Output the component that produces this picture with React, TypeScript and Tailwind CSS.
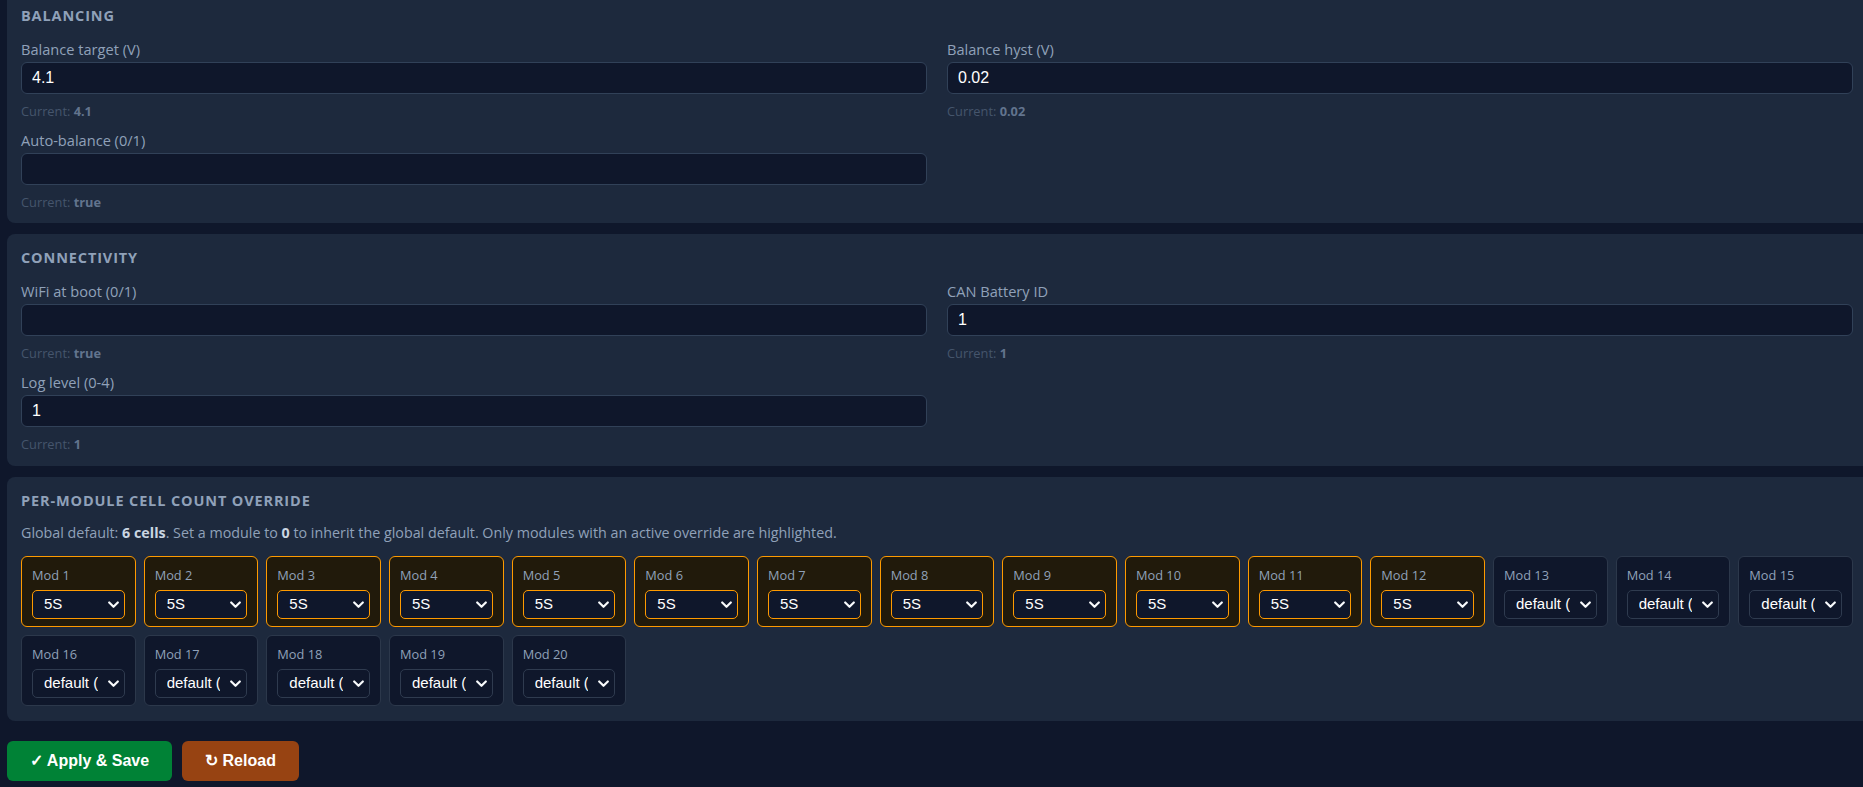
import React from 'react';

type FieldProps = { label: string; value: string; current: string };

// one labelled input with the "Current:" hint underneath
const Field: React.FC<FieldProps> = ({ label, value, current }) => (
  <div className="flex flex-col">
    <label className="mb-1 text-[14.6px] leading-[18px] text-slate-400">{label}</label>
    <input
      defaultValue={value}
      className="h-8 w-full rounded-md border border-slate-700 bg-slate-900 px-[10px] font-['Liberation_Sans',Arial,sans-serif] text-[16px] text-white outline-none"
    />
    <div className="mt-[9px] text-[12.8px] leading-4 text-slate-600">
      Current: <b className="font-bold text-slate-500">{current}</b>
    </div>
  </div>
);

const Panel: React.FC<{ title: string; children: React.ReactNode; className?: string }> = ({ title, children, className }) => (
  <section className={`ml-[7px] rounded-l-lg bg-slate-800 pl-[14px] pr-[10px] pt-[14px] ${className ?? ''}`}>
    <h2 className="mb-[14px] text-[14.5px] leading-5 font-bold uppercase tracking-[0.06em] text-slate-400">{title}</h2>
    {children}
  </section>
);

const OPTIONS = ['default (6S)', '1S', '2S', '3S', '4S', '5S', '6S', '7S', '8S', '9S', '10S', '11S', '12S', '13S', '14S', '15S', '16S'];

// modules 1-12 carry a 5S override, the rest inherit
const MODULES = Array.from({ length: 20 }, (_, i) => ({
  id: i + 1,
  value: i < 12 ? '5S' : 'default (6S)',
}));

const ModCard: React.FC<{ id: number; value: string }> = ({ id, value }) => {
  const active = value !== 'default (6S)';
  return (
    <div
      className={`flex flex-col gap-[6px] rounded-md border px-[10px] pt-[9px] pb-[7px] ${
        active ? 'border-amber-500 bg-[#211a0b]' : 'border-[#2c384b] bg-slate-900'
      }`}
    >
      <span className="text-[12.8px] leading-[18px] text-slate-400">Mod {id}</span>
      <div className="relative">
        <select
          defaultValue={value}
          className={`block h-[29px] w-full appearance-none rounded-[5px] border bg-slate-900 pl-[11px] pr-[26px] font-['Liberation_Sans',Arial,sans-serif] text-[15px] text-white outline-none ${
            active ? 'border-amber-500' : 'border-[#2f3b4f]'
          }`}
        >
          {OPTIONS.map((o) => (
            <option key={o} value={o}>
              {o}
            </option>
          ))}
        </select>
        <svg
          className="pointer-events-none absolute right-[6px] top-1/2 -translate-y-1/2"
          width="11"
          height="8"
          viewBox="0 0 11 8"
          fill="none"
        >
          <path d="M1.2 1.5 L5.5 5.8 L9.8 1.5" stroke="#f8fafc" strokeWidth="2.2" strokeLinecap="round" strokeLinejoin="round" />
        </svg>
      </div>
    </div>
  );
};

const App: React.FC = () => {
  return (
    <div className="min-h-screen overflow-hidden bg-slate-900 font-['Open_Sans','Noto_Sans',sans-serif]">
      <div className="-mt-[8px] flex flex-col gap-[11px]">
        <Panel title="Balancing" className="pb-[13px]">
          <div className="grid grid-cols-2 gap-x-5 gap-y-3">
            <Field label="Balance target (V)" value="4.1" current="4.1" />
            <Field label="Balance hyst (V)" value="0.02" current="0.02" />
            <Field label="Auto-balance (0/1)" value="" current="true" />
          </div>
        </Panel>

        <Panel title="Connectivity" className="pb-[14px]">
          <div className="grid grid-cols-2 gap-x-5 gap-y-3">
            <Field label="WiFi at boot (0/1)" value="" current="true" />
            <Field label="CAN Battery ID" value="1" current="1" />
            <Field label="Log level (0-4)" value="1" current="1" />
          </div>
        </Panel>

        <Panel title="Per-module cell count override" className="pb-[15px]">
          <p className="-mt-[1px] mb-[14px] text-[14.3px] leading-[18px] text-slate-400">
            Global default: <b className="font-bold text-slate-300">6 cells</b>. Set a module to{' '}
            <b className="font-bold text-slate-300">0</b> to inherit the global default. Only modules with an active
            override are highlighted.
          </p>
          <div className="grid grid-cols-[repeat(15,minmax(0,1fr))] gap-2">
            {MODULES.map((m) => (
              <ModCard key={m.id} id={m.id} value={m.value} />
            ))}
          </div>
        </Panel>
      </div>

      <div className="mt-5 ml-[7px] flex gap-[10px] font-['Liberation_Sans',Arial,sans-serif]">
        <button className="h-10 rounded-md bg-green-700 px-[23px] text-[16px] font-bold text-white">✓ Apply &amp; Save</button>
        <button className="h-10 rounded-md bg-[#974312] px-[23px] text-[16px] font-bold text-white">↻ Reload</button>
      </div>
    </div>
  );
};

export default App;
